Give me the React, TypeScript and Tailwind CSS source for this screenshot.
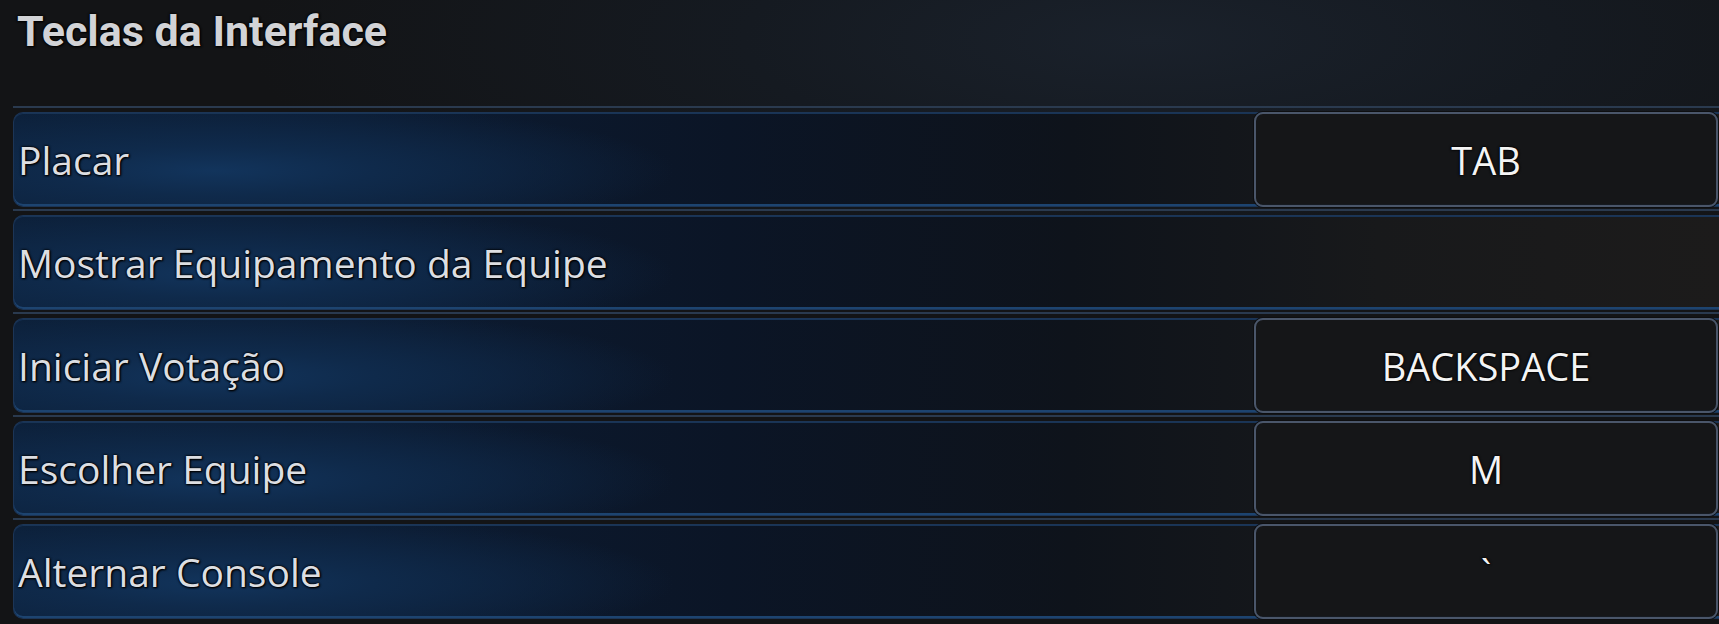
const rows: { label: string; key?: string }[] = [
  { label: "Placar", key: "TAB" },
  { label: "Mostrar Equipamento da Equipe" },
  { label: "Iniciar Votação", key: "BACKSPACE" },
  { label: "Escolher Equipe", key: "M" },
  { label: "Alternar Console", key: "`" },
];

export default function App() {
  return (
    <div className="w-[1719px] h-[624px] overflow-hidden bg-[#131416] bg-[radial-gradient(ellipse_900px_260px_at_1150px_40px,#1a212b_0%,#151a21_45%,#131416_100%)]">
      {/* Title */}
      <header className="h-[106px] pl-[17px] pt-[10px]">
        <h1 className="font-['Roboto',sans-serif] font-bold text-[43px] leading-[42px] text-[#d2d3d6] [text-shadow:0_0_2px_#000,0_0_3px_#000,1px_1px_2px_#000]">
          Teclas da Interface
        </h1>
      </header>

      {/* Rows */}
      <div className="flex flex-col">
        {rows.map((row) => (
          <div
            key={row.label}
            className="ml-[13px] h-[103px] pt-[4px] border-t-2 border-[#2a3a4f]"
          >
            <div className="relative h-[95px] flex items-center justify-between rounded-l-[10px] border border-r-0 border-[#1c3556] bg-[radial-gradient(ellipse_460px_70px_at_200px_62%,#12345c_0%,#0f2a4b_35%,transparent_100%),linear-gradient(90deg,#0c1f38_0%,#0c1c33_20%,#0b1526_42%,#0e131b_62%,#18191b_80%,#1c1b1b_100%)] shadow-[inset_0_-2px_0_#1d4470,inset_0_1px_0_#183456]">
              <span className="pl-[4px] font-['Open_Sans',sans-serif] text-[39px] leading-none text-[#dcdee2] [text-shadow:0_0_2px_#000,0_0_3px_#000,1px_1px_2px_#000]">
                {row.label}
              </span>
              {row.key && (
                <div className="w-[464px] h-[95px] mr-[1px] flex items-center justify-center rounded-[9px] border-2 border-[#4a566a] bg-[#151618]/90 shadow-[0_0_0_1px_#0d0e10]">
                  <span className="font-['Open_Sans',sans-serif] text-[38px] leading-none text-[#f4f4f4] [text-shadow:0_0_2px_#000,0_0_3px_#000,0_0_1px_#000]">
                    {row.key}
                  </span>
                </div>
              )}
            </div>
          </div>
        ))}
      </div>
    </div>
  );
}
